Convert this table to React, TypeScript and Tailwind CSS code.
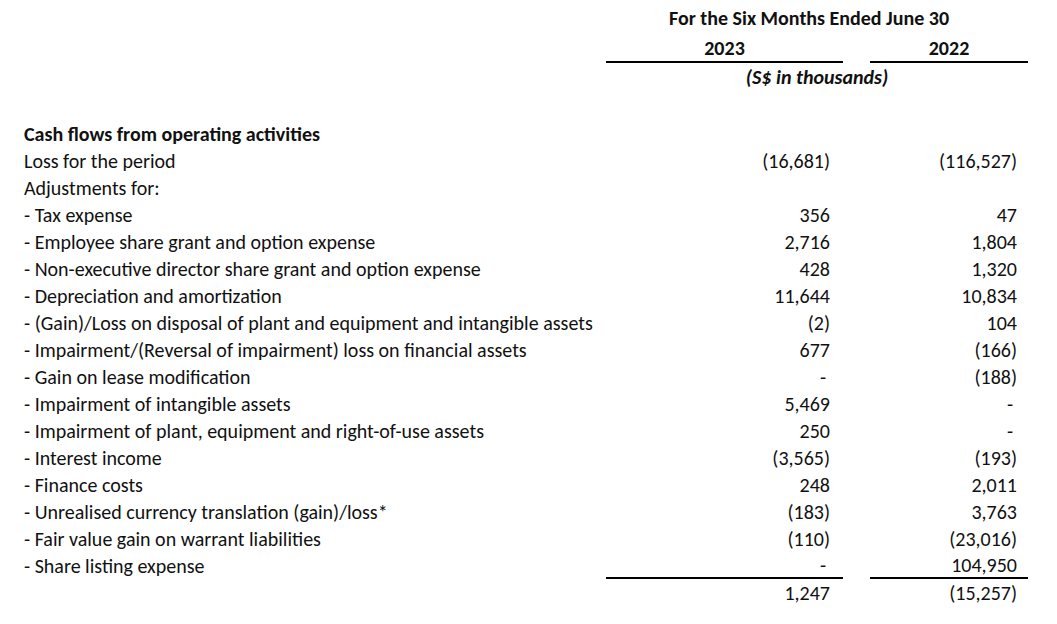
import React from "react";

const rows: [string, string, string, boolean?][] = [
  ["Loss for the period", "(16,681)", "(116,527)"],
  ["Adjustments for:", "", ""],
  ["- Tax expense", "356", "47"],
  ["- Employee share grant and option expense", "2,716", "1,804"],
  ["- Non-executive director share grant and option expense", "428", "1,320"],
  ["- Depreciation and amortization", "11,644", "10,834"],
  ["- (Gain)/Loss on disposal of plant and equipment and intangible assets", "(2)", "104"],
  ["- Impairment/(Reversal of impairment) loss on financial assets", "677", "(166)"],
  ["- Gain on lease modification", "-", "(188)"],
  ["- Impairment of intangible assets", "5,469", "-"],
  ["- Impairment of plant, equipment and right-of-use assets", "250", "-"],
  ["- Interest income", "(3,565)", "(193)"],
  ["- Finance costs", "248", "2,011"],
  ["- Unrealised currency translation (gain)/loss*", "(183)", "3,763"],
  ["- Fair value gain on warrant liabilities", "(110)", "(23,016)"],
  ["- Share listing expense", "-", "104,950", true],
];

function Num({ v }: { v: string }) {
  return <span className={v === "-" ? "pr-[4px]" : ""}>{v}</span>;
}

export default function App() {
  return (
    <div
      className="w-[1057px] h-[624px] bg-white text-[#111] text-[20px] overflow-hidden"
      style={{ fontFamily: "Carlito, Calibri, Lato, 'Liberation Sans', sans-serif" }}
    >
      <div className="grid grid-cols-[606px_237px_27px_158px_29px] pt-[5px]">
        <div />
        <div className="col-span-3 h-[27px] leading-[27px] font-bold text-center pr-[16px]">
          For the Six Months Ended June 30
        </div>
        <div />

        <div />
        <div className="h-[31px] pt-[3px] leading-[26px] font-bold text-center border-b-2 border-black">2023</div>
        <div />
        <div className="h-[31px] pt-[3px] leading-[26px] font-bold text-center border-b-2 border-black">2022</div>
        <div />

        <div />
        <div className="col-span-3 h-[27px] pt-[1px] leading-[27px] font-bold italic text-center">
          (S$ in thousands)
        </div>
        <div />
      </div>

      <div className="mt-[31px] grid grid-cols-[606px_237px_27px_158px_29px]">
        <div className="pl-[24px] h-[27px] leading-[27px] font-bold col-span-5">
          Cash flows from operating activities
        </div>
        {rows.map(([label, a, b, last]) => (
          <React.Fragment key={label}>
            <div className={`pl-[24px] leading-[27px] whitespace-nowrap ${last ? "h-[26px]" : "h-[27px]"}`}>{label}</div>
            <div
              className={`text-right pr-[13px] ${last ? "h-[26px] border-b-2 border-black leading-[25px]" : "h-[27px] leading-[27px]"}`}
            >
              <Num v={a} />
            </div>
            <div />
            <div
              className={`text-right pr-[11px] ${last ? "h-[26px] border-b-2 border-black leading-[25px]" : "h-[27px] leading-[27px]"}`}
            >
              <Num v={b} />
            </div>
            <div />
          </React.Fragment>
        ))}
        <div className="h-[28px]" />
        <div className="h-[28px] pt-[1px] leading-[27px] text-right pr-[13px]">1,247</div>
        <div />
        <div className="h-[28px] pt-[1px] leading-[27px] text-right pr-[11px]">(15,257)</div>
        <div />
      </div>
    </div>
  );
}
